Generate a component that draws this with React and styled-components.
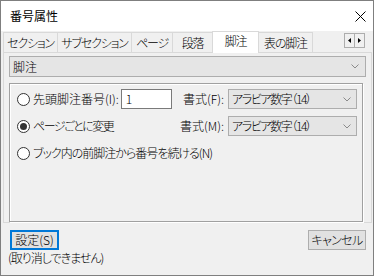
import React from 'react';
import styled, { createGlobalStyle } from 'styled-components';

const GlobalStyle = createGlobalStyle`
  html, body {
    margin: 0;
    padding: 0;
    background: #fff;
  }
  body {
    font-family: "Noto Sans CJK JP", "Noto Sans", sans-serif;
    font-size: 12px;
    font-weight: 300;
    color: #000;
    font-feature-settings: "palt";
  }
  * {
    box-sizing: border-box;
  }
`;

const Window = styled.div`
  width: 374px;
  height: 276px;
  border: 1px solid #7f7f7f;
  background: #f0f0f0;
  display: flex;
  flex-direction: column;
`;

const TitleBar = styled.div`
  height: 30px;
  flex-shrink: 0;
  background: #fff;
  display: flex;
  align-items: center;
  justify-content: space-between;
  padding: 0 7px 0 9px;
`;

const Title = styled.span`
  font-size: 12px;
  line-height: 14px;
  font-weight: 400;
`;

const TabStrip = styled.div`
  height: 21px;
  flex-shrink: 0;
  display: flex;
  align-items: flex-start;
  padding-left: 2px;
`;

const Tab = styled.div`
  width: ${(p) => p.w}px;
  height: ${(p) => (p.active ? 22 : 20)}px;
  margin-top: ${(p) => (p.active ? 0 : 1)}px;
  margin-left: ${(p) => (p.first ? 0 : -1)}px;
  padding-bottom: ${(p) => (p.active ? 3 : 0)}px;
  border: 1px solid #d9d9d9;
  border-bottom: none;
  background: ${(p) => (p.active ? '#fff' : '#f0f0f0')};
  display: flex;
  align-items: center;
  justify-content: center;
  line-height: 14px;
  letter-spacing: -1.2px;
  white-space: nowrap;
  position: relative;
  z-index: ${(p) => (p.active ? 1 : 0)};
`;

const Scroller = styled.div`
  margin: 2px 8px 0 auto;
  display: flex;
`;

const ScrollButton = styled.div`
  width: 11px;
  height: 15px;
  border: 1px solid #adadad;
  margin-left: ${(p) => (p.second ? -1 : 0)}px;
  background: #f0f0f0;
  display: flex;
  align-items: center;
  justify-content: center;
`;

const Panel = styled.div`
  width: 369px;
  height: 171px;
  margin-left: 2px;
  flex-shrink: 0;
  border: 1px solid #d9d9d9;
  padding: 3px 5px 0 5px;
  display: flex;
  flex-direction: column;
`;

const Combo = styled.div`
  width: ${(p) => p.w}px;
  height: ${(p) => p.h}px;
  flex-shrink: 0;
  border: 1px solid #adadad;
  background: #e5e5e5;
  display: flex;
  align-items: center;
  justify-content: space-between;
  padding: 0 ${(p) => p.pr}px 0 ${(p) => p.pl}px;
  line-height: 14px;
  white-space: nowrap;
`;

const ComboText = styled.span`
  letter-spacing: ${(p) => p.ls || 0}px;
`;

const GroupBox = styled.div`
  width: 354px;
  height: 139px;
  margin-top: 6px;
  border: 1px solid #a0a0a0;
  box-shadow: 1px 1px 0 #fff, inset 1px 1px 0 #fff;
  padding: 5px 5px 0 7px;
  display: flex;
  flex-direction: column;
  gap: 7px;
`;

const Row = styled.div`
  height: 20px;
  display: flex;
  align-items: center;
  white-space: nowrap;
  line-height: 14px;
`;

const Label = styled.span`
  letter-spacing: ${(p) => p.ls || 0}px;
`;

const Radio = styled.span`
  width: 13px;
  height: 13px;
  flex-shrink: 0;
  border: 1px solid #333;
  border-radius: 50%;
  background: #fff;
  margin-right: 3px;
  display: flex;
  align-items: center;
  justify-content: center;

  &::after {
    content: '';
    width: 7px;
    height: 7px;
    border-radius: 50%;
    background: ${(p) => (p.checked ? '#333' : 'transparent')};
  }
`;

const NumberInput = styled.div`
  width: 51px;
  height: 20px;
  margin-left: 2px;
  border: 1px solid #7a7a7a;
  background: #fff;
  padding-left: 4px;
  display: flex;
  align-items: center;
`;

const FormatField = styled.div`
  margin-left: auto;
  display: flex;
  align-items: center;
  gap: 4px;
`;

const Footer = styled.div`
  flex: 1;
  display: flex;
  justify-content: space-between;
  align-items: flex-start;
  padding: 7px 7px 0 9px;
`;

const FooterLeft = styled.div`
  display: flex;
  flex-direction: column;
  align-items: flex-start;
`;

const Button = styled.div`
  width: ${(p) => p.w}px;
  height: 20px;
  border: ${(p) => (p.primary ? '2px solid #0078d7' : '1px solid #adadad')};
  background: #e1e1e1;
  display: flex;
  align-items: center;
  justify-content: center;
  line-height: 14px;
  letter-spacing: ${(p) => p.ls || 0}px;
  white-space: nowrap;
`;

const Note = styled.div`
  margin: 1px 0 0 -2px;
  line-height: 14px;
  letter-spacing: -1px;
  white-space: nowrap;
`;

const Chevron = () => (
  <svg width="8" height="5" viewBox="0 0 8 5">
    <polyline points="0.5,0.5 4,4 7.5,0.5" fill="none" stroke="#8a8a8a" strokeWidth="1" />
  </svg>
);

const tabs = [
  { label: 'セクション', w: 55 },
  { label: 'サブセクション', w: 75 },
  { label: 'ページ', w: 42 },
  { label: '段落', w: 41 },
  { label: '脚注', w: 47, active: true },
  { label: '表の脚注', w: 55 },
];

export default function App() {
  return (
    <>
      <GlobalStyle />
      <Window>
        <TitleBar>
          <Title>番号属性</Title>
          <svg width="11" height="11" viewBox="0 0 11 11">
            <path d="M0.5 0.5 L10.5 10.5 M10.5 0.5 L0.5 10.5" stroke="#000" strokeWidth="1" />
          </svg>
        </TitleBar>

        <TabStrip>
          {tabs.map((t, i) => (
            <Tab key={t.label} w={t.w} active={t.active} first={i === 0}>
              {t.label}
            </Tab>
          ))}
          <Scroller>
            <ScrollButton>
              <svg width="3" height="5" viewBox="0 0 3 5">
                <polygon points="3,0 0,2.5 3,5" fill="#000" />
              </svg>
            </ScrollButton>
            <ScrollButton second>
              <svg width="3" height="5" viewBox="0 0 3 5">
                <polygon points="0,0 3,2.5 0,5" fill="#000" />
              </svg>
            </ScrollButton>
          </Scroller>
        </TabStrip>

        <Panel>
          <Combo w={357} h={21} pl={3} pr={6}>
            <ComboText>脚注</ComboText>
            <Chevron />
          </Combo>

          <GroupBox>
            <Row>
              <Radio />
              <Label>先頭脚注番号(I):</Label>
              <NumberInput>1</NumberInput>
              <FormatField>
                <Label>書式(F):</Label>
                <Combo w={129} h={20} pl={3} pr={5}>
                  <ComboText ls={-1.4}>アラビア数字（14）</ComboText>
                  <Chevron />
                </Combo>
              </FormatField>
            </Row>
            <Row>
              <Radio checked />
              <Label ls={-1.5}>ページごとに変更</Label>
              <FormatField>
                <Label>書式(M):</Label>
                <Combo w={129} h={20} pl={3} pr={5}>
                  <ComboText ls={-1.4}>アラビア数字（14）</ComboText>
                  <Chevron />
                </Combo>
              </FormatField>
            </Row>
            <Row>
              <Radio />
              <Label ls={-1}>ブック内の前脚注から番号を続ける(N)</Label>
            </Row>
          </GroupBox>
        </Panel>

        <Footer>
          <FooterLeft>
            <Button primary w={49}>設定(S)</Button>
            <Note>(取り消しできません)</Note>
          </FooterLeft>
          <Button w={58} ls={-0.6}>キャンセル</Button>
        </Footer>
      </Window>
    </>
  );
}
